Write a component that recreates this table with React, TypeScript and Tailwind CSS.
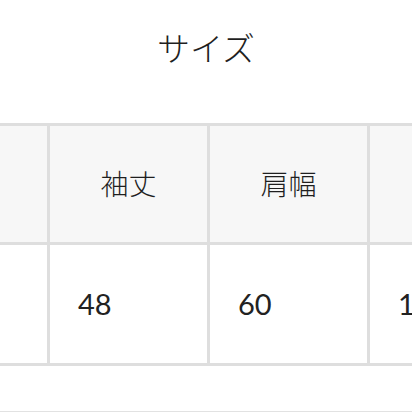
import React from 'react';

const headers = ['着丈', '袖丈', '肩幅', '身幅'];
const values = ['67', '48', '60', '1'];

const App: React.FC = () => {
  return (
    <div
      className="w-[412px] h-[412px] overflow-hidden bg-white text-[#222]"
      style={{ fontFamily: 'Lato, "Noto Sans CJK JP", sans-serif' }}
    >
      <h1 className="pt-[28px] text-center text-[33px] leading-[40px] font-light text-[#1f1f1f]">
        サイズ
      </h1>

      <div className="mt-[55px] ml-[-110px] w-[700px]">
        {/* header row */}
        <div className="flex border-t-[3px] border-b-[3px] border-[#dedede] bg-[#f7f7f7]">
          {headers.map((h) => (
            <div
              key={h}
              className="w-[160px] h-[116px] shrink-0 border-r-[3px] border-[#dedede] flex items-center justify-center text-[28px] font-light text-[#1f1f1f]"
            >
              {h}
            </div>
          ))}
        </div>

        {/* value row */}
        <div className="flex border-b-[3px] border-[#dedede] bg-white">
          {values.map((v, i) => (
            <div
              key={i}
              className="w-[160px] h-[118px] shrink-0 border-r-[3px] border-[#dedede] flex items-center pl-[28px] text-[29px] text-[#222]"
            >
              {v}
            </div>
          ))}
        </div>
      </div>

      <div className="mt-[45px] border-t-2 border-[#e2e2e2]" />
    </div>
  );
};

export default App;
